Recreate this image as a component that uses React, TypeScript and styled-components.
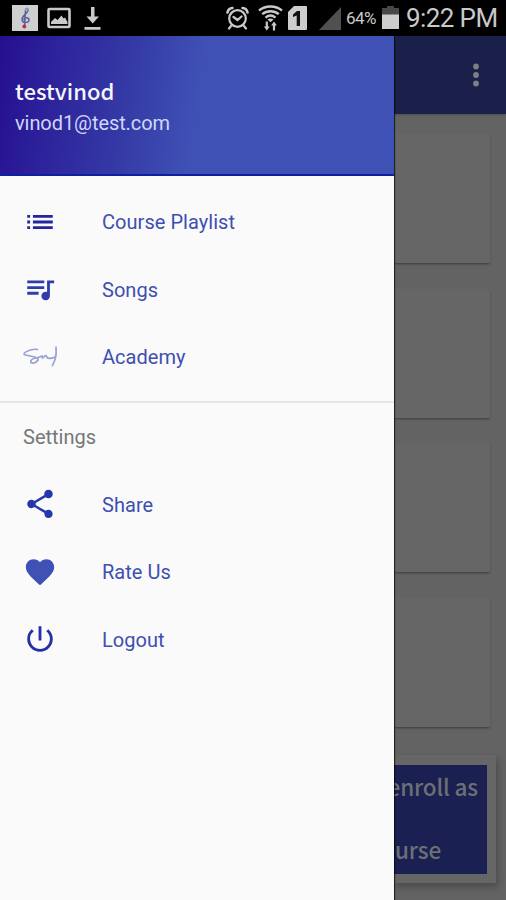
import React from "react";
import styled, { createGlobalStyle } from "styled-components";
import {
  MdList,
  MdQueueMusic,
  MdShare,
  MdFavorite,
  MdPowerSettingsNew,
} from "react-icons/md";

const GlobalStyle = createGlobalStyle`
  *, *::before, *::after { box-sizing: border-box; }
  body { margin: 0; background: #646464; }
`;

const Screen = styled.div`
  width: 506px;
  height: 900px;
  overflow: hidden;
  display: flex;
  flex-direction: column;
  font-family: Roboto, sans-serif;
`;

const StatusBar = styled.header`
  height: 36px;
  flex: none;
  display: flex;
  align-items: center;
  justify-content: space-between;
  background: #000;
  color: #c9c9c9;
  padding: 0 9px 0 11px;
`;

const StatusGroup = styled.div`
  display: flex;
  align-items: center;
  height: 36px;
`;

const StatusIcon = styled.svg<{ $gap?: number }>`
  display: block;
  flex: none;
  margin-right: ${(p) => p.$gap ?? 0}px;
`;

const Battery = styled.span`
  width: 36px;
  font-size: 17px;
  line-height: 37px;
  letter-spacing: -0.6px;
  white-space: nowrap;
`;

const Clock = styled.span`
  width: 91px;
  font-size: 26px;
  line-height: 36px;
  letter-spacing: -0.6px;
  white-space: nowrap;
`;

const Body = styled.div`
  flex: 1;
  min-height: 0;
  display: grid;
  grid-template-columns: 394px 112px;
`;

const Drawer = styled.aside`
  background: #fafafa;
  z-index: 1;
  box-shadow: 1px 0 1px rgba(0, 0, 0, 0.65);
`;

const Account = styled.div`
  height: 140px;
  padding: 37px 15px 0;
  background: linear-gradient(98deg, #250f90 0%, #2c209a 12%, #3439a5 32%, #3f51b5 50%, #3f51b5 100%);
  border-bottom: 2px solid #0c20a0;
`;

const AccountName = styled.div`
  font-family: "Noto Sans CJK SC", "Noto Sans", sans-serif;
  font-weight: 500;
  font-size: 22px;
  line-height: 34px;
  letter-spacing: 0.05px;
  color: #f4f5ff;
`;

const AccountEmail = styled.div`
  font-size: 20px;
  line-height: 28px;
  letter-spacing: -0.08px;
  padding-top: 2px;
  color: #cfd6fa;
`;

const Menu = styled.nav`
  padding: 12.5px 0 10px;
`;

const SettingsMenu = styled.nav`
  border-top: 2px solid #e6e6e6;
`;

const Row = styled.a`
  height: 67.5px;
  display: grid;
  grid-template-columns: 80px 1fr;
  align-items: center;
  color: #3f4fb0;
`;

const IconSlot = styled.span<{ $color: string }>`
  display: flex;
  justify-content: center;
  color: ${(p) => p.$color};
  font-size: 34px;
  padding-bottom: 1.5px;
`;

const Label = styled.span`
  padding-left: 22px;
  font-size: 20px;
  line-height: 28px;
  letter-spacing: 0.04px;
  white-space: nowrap;
`;

const SectionTitle = styled.h2`
  margin: 0;
  height: 68px;
  padding-left: 23px;
  font-weight: 400;
  font-size: 20px;
  line-height: 68px;
  letter-spacing: 0;
  color: #777;
`;

const Content = styled.main`
  display: flex;
  flex-direction: column;
  min-width: 0;
  overflow: hidden;
  background: #636363;
`;

const Toolbar = styled.div`
  height: 78px;
  flex: none;
  display: flex;
  align-items: center;
  justify-content: flex-end;
  padding-right: 24px;
  background: #1a2049;
  box-shadow: 0 1px 2px rgba(0, 0, 0, 0.2);
`;

const Cards = styled.div`
  display: flex;
  flex-direction: column;
  gap: 25.5px;
  padding: 20px 16px 0 0;
`;

const Card = styled.div`
  height: 129px;
  border-radius: 0 2px 2px 0;
  background: #666;
  box-shadow: 0 2px 2px -1px rgba(0, 0, 0, 0.3), 1px 2px 2px rgba(0, 0, 0, 0.08);
`;

const EnrollCard = styled.div`
  height: 128px;
  flex: none;
  margin: 28px 10px 0 0;
  padding: 10px 9px 9px 0;
  background: #666;
  box-shadow: 2px 4px 7px rgba(0, 0, 0, 0.25);
`;

const Banner = styled.div`
  height: 109px;
  background: #1a2052;
  color: #6c7075;
  font-family: "Noto Sans CJK SC", "Noto Sans", sans-serif;
  font-size: 22.5px;
  font-weight: 500;
  letter-spacing: -0.15px;
  line-height: 32px;
  padding-top: 5px;
`;

const BannerLine = styled.div<{ $inset: number; $top: number }>`
  display: flex;
  justify-content: flex-end;
  white-space: nowrap;
  margin: ${(p) => p.$top}px ${(p) => p.$inset}px 0 0;
`;

const SignatureIcon = () => (
  <svg width="36" height="26" viewBox="0 0 36 26" fill="none" stroke="#9aa1d3" strokeWidth="1.7" strokeLinecap="round" strokeLinejoin="round">
    <path d="M15.500 5.500C12 4.500 3 7 2 10c-.5 2 12 1.500 14 5 .8 2-4 4.500-6 4-2.500-.6-1-4 2-4.500 3-.5 6-1.500 8-2.500 0 1 0 1.800.5 2 1.500-1 2.500-2.500 3.500-2.300 1 .4.500 2.300 2 2.500 3 .5 4.500 0 6.500-1" />
    <path d="M34 3c.5 5 .2 8.500-.8 12-.6 2-1.700 4-2.700 6.500" />
  </svg>
);

const menuItems = [
  { label: "Course Playlist", icon: <MdList />, color: "#25259f" },
  { label: "Songs", icon: <MdQueueMusic />, color: "#2f3caa" },
  { label: "Academy", icon: <SignatureIcon />, color: "#8790ca" },
];

const settingItems = [
  { label: "Share", icon: <MdShare />, color: "#2637aa" },
  { label: "Rate Us", icon: <MdFavorite />, color: "#3f51b5" },
  { label: "Logout", icon: <MdPowerSettingsNew />, color: "#252fa5" },
];

type Item = (typeof menuItems)[number];

const MenuRow = ({ label, icon, color }: Item) => (
  <Row>
    <IconSlot $color={color}>{icon}</IconSlot>
    <Label>{label}</Label>
  </Row>
);

export default function App() {
  return (
    <Screen>
      <GlobalStyle />
      <StatusBar>
        <StatusGroup>
          <StatusIcon width="28" height="28" viewBox="0 0 28 28" $gap={8}>
            <rect x="1" y="1" width="26" height="26" fill="#cfcfcf" />
            <g fill="none" strokeLinecap="round">
              <path d="M13.500 23L14.500 6c.3-2 3-2 2.500.6-.5 3-6 5-6 8.600 0 4.500 7 4 7 .8 0-3-5-3-5-.3" stroke="#5a609a" strokeWidth="1.500" />
              <path d="M14.500 6c.3-2 3-2 2.500.6" stroke="#7ea3b8" strokeWidth="1.500" />
            </g>
            <circle cx="13.300" cy="22.500" r="1.900" fill="#b52c50" />
          </StatusIcon>
          <StatusIcon width="24" height="22" viewBox="0 0 24 22" $gap={13}>
            <rect x="1.500" y="2" width="21" height="18" rx="1" fill="none" stroke="#c9c9c9" strokeWidth="2.600" />
            <path d="M4 17v-2l4-4 2.500 2 4-4.500 2 3 1.500-1L20.500 15v2z" fill="#c9c9c9" />
          </StatusIcon>
          <StatusIcon width="17" height="25" viewBox="0 0 17 25">
            <path d="M7 1h3.500v9.500H15L8.700 17.500 2.500 10.500H7zM.5 21h16v2.800H.5z" fill="#c9c9c9" />
          </StatusIcon>
        </StatusGroup>
        <StatusGroup>
          <StatusIcon width="23" height="24" viewBox="0 0 23 24" $gap={9}>
            <g fill="none" stroke="#c9c9c9" strokeWidth="2.200" strokeLinecap="round">
              <circle cx="11.500" cy="12.500" r="8.300" />
              <path d="M7.500 11l4 3 4-3.500M5 20l-2 2.500M18 20l2 2.500" />
              <path d="M1.500 6.500C2 4 4 2.200 6.500 2M21.500 6.500C21 4 19 2.200 16.500 2" strokeWidth="2.600" />
            </g>
          </StatusIcon>
          <StatusIcon width="25" height="26" viewBox="0 0 25 26" $gap={5}>
            <g fill="none" stroke="#c9c9c9" strokeWidth="2.400">
              <path d="M1 5.500C7.500.200 17.500.200 24 5.500M4.200 9.200c4.800-4 11.800-4 16.600 0M7.500 12.600c3-2.400 7-2.400 10 0" />
            </g>
            <path d="M9.500 14.500c1.800-1.400 4.200-1.400 6 0l-3 2.700z" fill="#c9c9c9" />
            <path d="M7.700 16.500h2.200v5h1.800l-2.900 4-2.900-4h1.800zM14.900 25.500h2.200v-5h1.800l-2.900-4-2.900 4h1.800z" fill="#c9c9c9" />
          </StatusIcon>
          <StatusIcon width="19" height="24" viewBox="0 0 19 24" $gap={12}>
            <path d="M6 0h12a1 1 0 0 1 1 1v22a1 1 0 0 1-1 1H1a1 1 0 0 1-1-1V6z" fill="#cdcdcd" />
            <path d="M5 8.500L9 5h3v15H8.700V9.500L5 11z" fill="#111" />
          </StatusIcon>
          <StatusIcon width="22" height="23" viewBox="0 0 22 23" $gap={5}>
            <path d="M22 0v23H0z" fill="#505050" />
          </StatusIcon>
          <Battery>64%</Battery>
          <StatusIcon width="17" height="24" viewBox="0 0 17 24" $gap={7}>
            <path d="M5 0h7v2h5v7H0V2h5z" fill="#484848" />
            <path d="M0 8.500h17V23H0z" fill="#cdcdcd" />
          </StatusIcon>
          <Clock>9:22 PM</Clock>
        </StatusGroup>
      </StatusBar>
      <Body>
        <Drawer>
          <Account>
            <AccountName>testvinod</AccountName>
            <AccountEmail>vinod1@test.com</AccountEmail>
          </Account>
          <Menu>
            {menuItems.map((item) => (
              <MenuRow key={item.label} {...item} />
            ))}
          </Menu>
          <SettingsMenu>
            <SectionTitle>Settings</SectionTitle>
            {settingItems.map((item) => (
              <MenuRow key={item.label} {...item} />
            ))}
          </SettingsMenu>
        </Drawer>
        <Content>
          <Toolbar>
            <svg width="12" height="24" viewBox="0 0 12 24" fill="#7d7f83">
              <circle cx="6" cy="3.500" r="2.900" />
              <circle cx="6" cy="12" r="2.900" />
              <circle cx="6" cy="20.500" r="2.900" />
            </svg>
          </Toolbar>
          <Cards>
            <Card />
            <Card />
            <Card />
            <Card />
          </Cards>
          <EnrollCard>
            <Banner>
              <BannerLine $inset={9} $top={0}>enroll as</BannerLine>
              <BannerLine $inset={46} $top={31}>urse</BannerLine>
            </Banner>
          </EnrollCard>
        </Content>
      </Body>
    </Screen>
  );
}
